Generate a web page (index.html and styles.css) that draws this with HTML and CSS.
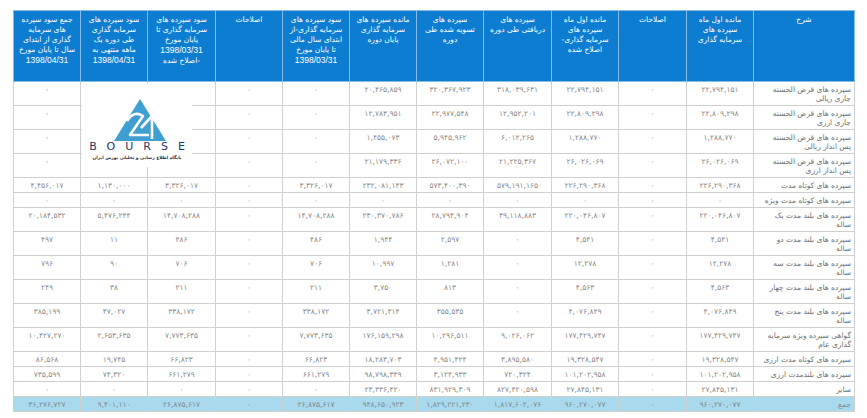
FILE: index.html
```html
<!DOCTYPE html>
<html lang="fa" dir="rtl">
<head>
<meta charset="utf-8">
<title>سپرده های سرمایه گذاری</title>
<link rel="stylesheet" href="styles.css">
</head>
<body>
<div class="page">
  <table class="report">
    <colgroup>
      <col class="c-desc"><col class="c67"><col class="c68"><col class="c67"><col class="c68"><col class="c67"><col class="c67"><col class="c67"><col class="c67"><col class="c68"><col class="c67"><col class="c67">
    </colgroup>
    <thead>
      <tr>
        <th>شرح</th>
        <th>مانده اول ماه<br>سپرده های<br>سرمایه گذاری</th>
        <th>اصلاحات</th>
        <th>مانده اول ماه<br>سپرده های<br>سرمایه گذاری-<br>اصلاح شده</th>
        <th>سپرده های<br>دریافتی طی دوره</th>
        <th>سپرده های<br>تسویه شده طی<br>دوره</th>
        <th>مانده سپرده های<br>سرمایه گذاری<br>پایان دوره</th>
        <th>سود سپرده های<br>سرمایه گذاری-از<br>ابتدای سال مالی<br>تا پایان مورخ<br><span class="lat">1398/03/31</span></th>
        <th>اصلاحات</th>
        <th>سود سپرده های<br>سرمایه گذاری تا<br>پایان مورخ<br><span class="lat">1398/03/31</span><br>-اصلاح شده</th>
        <th>سود سپرده های<br>سرمایه گذاری<br>طی دوره یک<br>ماهه منتهی به<br><span class="lat">1398/04/31</span></th>
        <th>جمع سود سپرده<br>های سرمایه<br>گذاری از ابتدای<br>سال تا پایان مورخ<br><span class="lat">1398/04/31</span></th>
      </tr>
    </thead>
    <tbody>
      <tr><td class="desc">سپرده های قرض الحسنه<br>جاری ریالی</td><td>۲۲,۷۹۴,۱۵۱</td><td>۰</td><td>۲۲,۷۹۴,۱۵۱</td><td>۳۱۸,۰۳۹,۶۳۱</td><td>۳۲۰,۳۶۷,۹۲۳</td><td>۲۰,۴۶۵,۸۵۹</td><td>۰</td><td>۰</td><td></td><td></td><td>۰</td></tr>
      <tr><td class="desc">سپرده های قرض الحسنه<br>جاری ارزی</td><td>۲۲,۸۰۹,۲۹۸</td><td>۰</td><td>۲۲,۸۰۹,۲۹۸</td><td>۱۲,۹۵۲,۲۰۱</td><td>۲۲,۹۷۷,۵۴۸</td><td>۱۲,۷۸۳,۹۵۱</td><td>۰</td><td>۰</td><td></td><td></td><td>۰</td></tr>
      <tr><td class="desc">سپرده های قرض الحسنه<br>پس انداز ریالی</td><td>۱,۲۸۸,۷۷۰</td><td>۰</td><td>۱,۲۸۸,۷۷۰</td><td>۶,۰۱۲,۲۶۵</td><td>۵,۹۴۵,۹۶۲</td><td>۱,۴۵۵,۰۷۳</td><td>۰</td><td>۰</td><td></td><td></td><td>۰</td></tr>
      <tr><td class="desc">سپرده های قرض الحسنه<br>پس انداز ارزی</td><td>۲۶,۰۲۶,۰۶۹</td><td>۰</td><td>۲۶,۰۲۶,۰۶۹</td><td>۲۱,۲۲۵,۳۶۷</td><td>۲۶,۰۷۲,۱۰۰</td><td>۲۱,۱۷۹,۳۳۶</td><td>۰</td><td>۰</td><td></td><td></td><td>۰</td></tr>
      <tr><td class="desc">سپرده های کوتاه مدت</td><td>۲۲۶,۲۹۰,۳۶۸</td><td>۰</td><td>۲۲۶,۲۹۰,۳۶۸</td><td>۵۷۹,۱۹۱,۱۶۵</td><td>۵۷۳,۴۰۰,۳۹۰</td><td>۲۳۲,۰۸۱,۱۴۳</td><td>۳,۳۲۶,۰۱۷</td><td>۰</td><td>۳,۳۲۶,۰۱۷</td><td>۱,۱۳۰,۰۰۰</td><td>۴,۴۵۶,۰۱۷</td></tr>
      <tr><td class="desc">سپرده های کوتاه مدت ویژه</td><td>۰</td><td>۰</td><td>۰</td><td>۰</td><td>۰</td><td>۰</td><td>۰</td><td>۰</td><td>۰</td><td>۰</td><td>۰</td></tr>
      <tr><td class="desc">سپرده های بلند مدت یک<br>ساله</td><td>۲۲۰,۰۴۶,۸۰۷</td><td>۰</td><td>۲۲۰,۰۴۶,۸۰۷</td><td>۳۹,۱۱۸,۸۸۳</td><td>۲۸,۷۹۴,۹۰۴</td><td>۲۳۰,۳۷۰,۷۸۶</td><td>۱۴,۷۰۸,۲۸۸</td><td>۰</td><td>۱۴,۷۰۸,۲۸۸</td><td>۵,۴۷۶,۲۴۴</td><td>۲۰,۱۸۴,۵۳۲</td></tr>
      <tr><td class="desc">سپرده های بلند مدت دو<br>ساله</td><td>۴,۵۴۱</td><td>۰</td><td>۴,۵۴۱</td><td>۰</td><td>۲,۵۹۷</td><td>۱,۹۴۴</td><td>۴۸۶</td><td>۰</td><td>۴۸۶</td><td>۱۱</td><td>۴۹۷</td></tr>
      <tr><td class="desc">سپرده های بلند مدت سه<br>ساله</td><td>۱۲,۲۷۸</td><td>۰</td><td>۱۲,۲۷۸</td><td>۰</td><td>۱,۲۸۱</td><td>۱۰,۹۹۷</td><td>۷۰۶</td><td>۰</td><td>۷۰۶</td><td>۹۰</td><td>۷۹۶</td></tr>
      <tr><td class="desc">سپرده های بلند مدت چهار<br>ساله</td><td>۴,۵۶۳</td><td>۰</td><td>۴,۵۶۳</td><td>۰</td><td>۸۱۳</td><td>۳,۷۵۰</td><td>۲۱۱</td><td>۰</td><td>۲۱۱</td><td>۳۸</td><td>۲۴۹</td></tr>
      <tr><td class="desc">سپرده های بلند مدت پنج<br>ساله</td><td>۴,۰۷۶,۸۴۹</td><td>۰</td><td>۴,۰۷۶,۸۴۹</td><td>۰</td><td>۳۵۵,۵۳۵</td><td>۳,۷۲۱,۳۱۴</td><td>۳۳۸,۱۷۲</td><td>۰</td><td>۳۳۸,۱۷۲</td><td>۴۷,۰۲۷</td><td>۳۸۵,۱۹۹</td></tr>
      <tr><td class="desc">گواهی سپرده ویژه سرمایه<br>گذاری عام</td><td>۱۷۷,۴۲۹,۷۴۷</td><td>۰</td><td>۱۷۷,۴۲۹,۷۴۷</td><td>۹,۰۲۶,۰۶۲</td><td>۱۰,۲۹۶,۵۱۱</td><td>۱۷۶,۱۵۹,۲۹۸</td><td>۷,۷۷۳,۶۳۵</td><td>۰</td><td>۷,۷۷۳,۶۳۵</td><td>۲,۶۵۳,۶۳۵</td><td>۱۰,۴۲۷,۲۷۰</td></tr>
      <tr><td class="desc">سپرده های کوتاه مدت ارزی</td><td>۱۹,۳۲۸,۵۴۷</td><td>۰</td><td>۱۹,۳۲۸,۵۴۷</td><td>۳,۸۹۵,۵۸۰</td><td>۴,۹۵۱,۴۲۴</td><td>۱۸,۲۸۳,۷۰۳</td><td>۶۶,۸۲۳</td><td>۰</td><td>۶۶,۸۲۳</td><td>۱۹,۷۴۵</td><td>۸۶,۵۶۸</td></tr>
      <tr><td class="desc">سپرده های بلندمدت ارزی</td><td>۱۰۱,۲۰۲,۹۵۸</td><td>۰</td><td>۱۰۱,۲۰۲,۹۵۸</td><td>۷۲۰,۳۲۴</td><td>۳,۱۲۴,۹۳۳</td><td>۹۸,۷۹۸,۳۴۹</td><td>۶۶۱,۲۷۹</td><td>۰</td><td>۶۶۱,۲۷۹</td><td>۷۴,۳۲۰</td><td>۷۳۵,۵۹۹</td></tr>
      <tr><td class="desc">سایر</td><td>۲۷,۸۴۵,۱۳۱</td><td>۰</td><td>۲۷,۸۴۵,۱۳۱</td><td>۸۲۷,۴۲۰,۵۹۸</td><td>۸۳۱,۹۲۹,۳۰۹</td><td>۲۳,۳۳۶,۴۲۰</td><td>۰</td><td>۰</td><td>۰</td><td>۰</td><td>۰</td></tr>
      <tr class="total"><td class="desc">جمع</td><td>۹۶۰,۲۷۰,۰۷۷</td><td>۰</td><td>۹۶۰,۲۷۰,۰۷۷</td><td>۱,۸۱۷,۶۰۲,۰۷۶</td><td>۱,۸۲۹,۲۲۱,۲۳۰</td><td>۹۴۸,۶۵۰,۹۲۳</td><td>۲۶,۸۷۵,۶۱۷</td><td>۰</td><td>۲۶,۸۷۵,۶۱۷</td><td>۹,۴۰۱,۱۱۰</td><td>۳۶,۲۷۶,۷۲۷</td></tr>
    </tbody>
  </table>

  <div class="logo">
    <svg class="logo-mark" width="110" height="60" viewBox="0 0 110 60">
      <polygon points="58,16 32,58 84,58" fill="#3f9fd1"/>
      <path d="M45 38 Q 52 27 61 33 L 48 52 L 67 52" fill="none" stroke="#fff" stroke-width="2.6" stroke-linejoin="round"/>
      <path d="M59 45 L 70 33 L 70 56" fill="none" stroke="#fff" stroke-width="2.6" stroke-linejoin="round"/>
    </svg>
    <div class="brand-text">BOURSE</div>
    <div class="tagline">پایگاه اطلاع رسانی و تحلیلی بورس ایران</div>
  </div>
</div>
</body>
</html>
```

FILE: styles.css
```css
html, body {
  margin: 0;
  padding: 0;
  background: #ffffff;
}

body {
  font-family: "DejaVu Sans", "Noto Sans", sans-serif;
}

.page {
  position: relative;
  padding: 10px 12px 0 14px;
}

.report {
  width: 841px;
  table-layout: fixed;
  border-collapse: collapse;
  font-size: 7.5px;
}

.c-desc { width: 101px; }
.c67 { width: 67px; }
.c68 { width: 68px; }

.report th {
  height: 66px;
  padding: 4px 2px 0;
  background: #0d7dd2;
  color: #ffffff;
  font-weight: normal;
  line-height: 10px;
  vertical-align: top;
  text-align: center;
  border: 1px solid #86bde8;
}

.report th .lat {
  font-family: "Liberation Sans", "DejaVu Sans", sans-serif;
  font-size: 8.5px;
}

.report td {
  padding: 3px 2px 2px;
  line-height: 9px;
  color: #8a8a8a;
  text-align: center;
  vertical-align: top;
  border: 1px solid #cfcfcf;
  white-space: nowrap;
}

.report td.desc {
  text-align: right;
  color: #6f6f6f;
  padding-right: 3px;
}

.report tr.total td {
  background: #a8d9ec;
  color: #7e8c92;
}

.logo {
  position: absolute;
  left: 82px;
  top: 83px;
  width: 110px;
  height: 84px;
  background: #ffffff;
  display: flex;
  flex-direction: column;
  align-items: center;
}

.logo-mark {
  display: block;
  flex: none;
}

.brand-text {
  margin-top: -1px;
  font-family: "DejaVu Sans", sans-serif;
  font-size: 11px;
  line-height: 10px;
  letter-spacing: 10px;
  margin-right: -10px;
  color: #1f3866;
  direction: ltr;
}

.tagline {
  margin-top: 3px;
  font-size: 4.4px;
  font-weight: bold;
  line-height: 6px;
  color: #1f2c4a;
  white-space: nowrap;
}
```
